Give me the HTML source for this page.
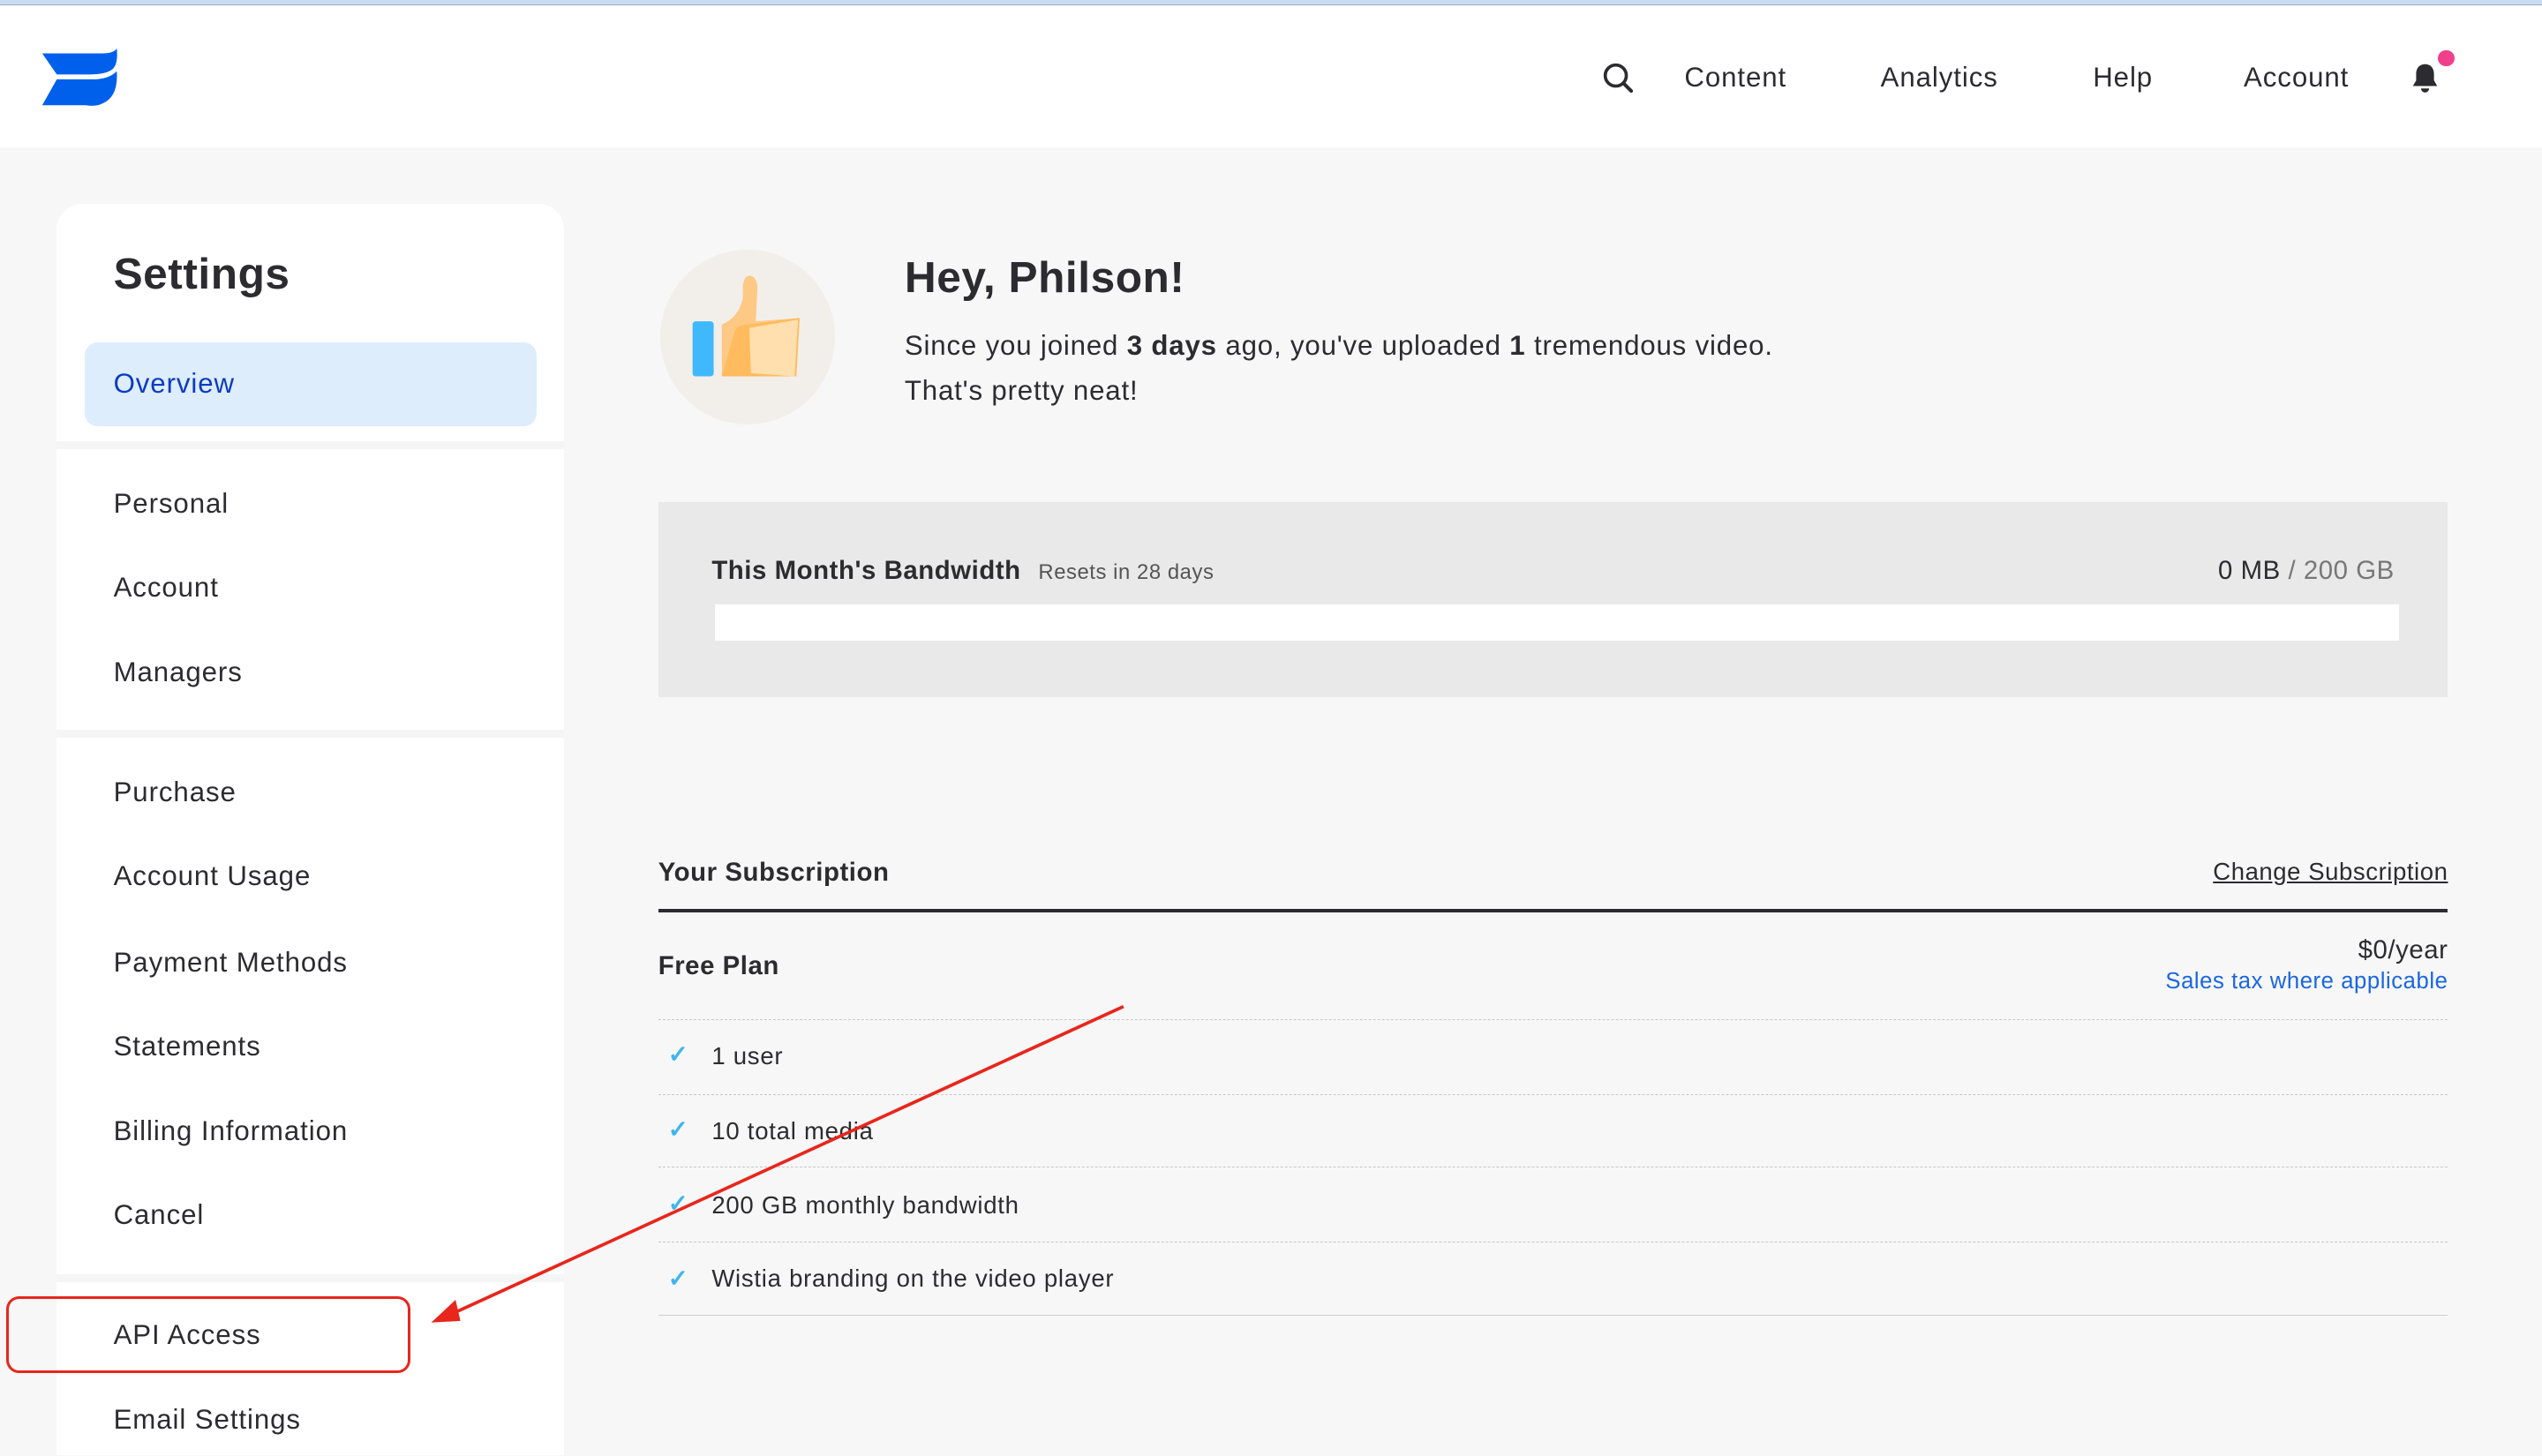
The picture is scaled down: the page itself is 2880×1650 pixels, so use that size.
<!DOCTYPE html>
<html><head><meta charset="utf-8"><style>
*{box-sizing:border-box;margin:0;padding:0}
html,body{width:2880px;height:1650px;overflow:hidden}
body{background:#f7f7f7;font-family:"Liberation Sans",sans-serif;color:#2c2c30;letter-spacing:0.3px}
#w{zoom:1.83673;width:1568px;height:898px;position:relative;overflow:hidden}
.top{position:absolute;left:0;top:0;width:1568px;height:3px;background:#c9dbf3;border-bottom:1px solid #9fb0c8}
.hdr{position:absolute;left:0;top:4px;width:1568px;height:87px;background:#fff}
.nav{position:absolute;top:38px;font-size:17px;color:#2c2c30;letter-spacing:0.5px}
.side{position:absolute;left:35px;top:126px;width:313px;height:800px;background:#fff;border-radius:16px}
.band{position:absolute;left:35px;width:313px;height:5px;background:#f5f5f5}
.it{position:absolute;left:70px;font-size:17px;color:#2c2c30;letter-spacing:0.5px}
.dash{position:absolute;left:406px;width:1104px;border-top:1px dashed #c8c8c8}
.ck{position:absolute;left:412px;color:#3fb5f0;font-size:15px;font-weight:bold}
.fi{position:absolute;left:439px;font-size:15px;color:#2c2c30;letter-spacing:0.4px}
</style></head><body><div id="w">
<div class="top"></div>
<div class="hdr"></div>
<svg style="position:absolute;left:25px;top:30px" width="48" height="36" viewBox="0 0 48 36">
<path d="M1 3 L38 3 Q45 3 47 0 Q48 10 44 13 Q40 16 30 16 L10 16 Z" fill="#0060eb"/>
<path d="M10 19 L32 19 Q42 19 47 14 Q48 30 38 34 Q34 36 28 35 L1 35 Z" fill="#0060eb"/>
</svg>
<svg style="position:absolute;left:988px;top:38px" width="20" height="20" viewBox="0 0 20 20"><circle cx="8.5" cy="8.5" r="6.5" fill="none" stroke="#2c2c30" stroke-width="2"/><path d="M13.5 13.5L18 18" stroke="#2c2c30" stroke-width="2.2" stroke-linecap="round"/></svg>
<div class="nav" style="left:1039px">Content</div>
<div class="nav" style="left:1160px">Analytics</div>
<div class="nav" style="left:1291px">Help</div>
<div class="nav" style="left:1384px">Account</div>
<svg style="position:absolute;left:1487px;top:38px" width="18" height="20" viewBox="0 0 18 20"><path d="M9 1.5c-3.5 0-5.5 2.5-5.5 6v4L1.5 15h15l-2-3.5v-4c0-3.5-2-6-5.5-6z" fill="#2c2c30"/><path d="M6.5 16.5a2.5 2.5 0 0 0 5 0z" fill="#2c2c30"/></svg>
<div style="position:absolute;left:1504px;top:31px;width:10px;height:10px;border-radius:50%;background:#f0408b"></div>

<div class="side"></div>
<div style="position:absolute;left:70px;top:153px;font-size:27px;font-weight:bold;color:#2c2c30">Settings</div>
<div style="position:absolute;left:52px;top:211px;width:279px;height:52px;background:#deedfc;border-radius:8px"></div>
<div class="it" style="top:227px;color:#0a3bc2">Overview</div>
<div class="band" style="top:272px"></div>
<div class="it" style="top:301px">Personal</div>
<div class="it" style="top:353px">Account</div>
<div class="it" style="top:405px">Managers</div>
<div class="band" style="top:450px"></div>
<div class="it" style="top:479px">Purchase</div>
<div class="it" style="top:531px">Account Usage</div>
<div class="it" style="top:584px">Payment Methods</div>
<div class="it" style="top:636px">Statements</div>
<div class="it" style="top:688px">Billing Information</div>
<div class="it" style="top:740px">Cancel</div>
<div class="band" style="top:786px"></div>
<div class="it" style="top:814px">API Access</div>
<div class="it" style="top:866px">Email Settings</div>
<div style="position:absolute;left:4px;top:800px;width:249px;height:47px;border:2px solid #e8261c;border-radius:8px"></div>

<div style="position:absolute;left:407px;top:154px;width:108px;height:108px;border-radius:50%;background:#f2efeb"></div>
<svg style="position:absolute;left:425px;top:168px" width="72" height="70" viewBox="0 0 72 70">
<rect x="2" y="30" width="13" height="34" rx="2" fill="#40b8fc"/>
<path d="M20 32 Q30 28 33 16 L33 8 Q34 1 38 2 Q42 3 42 10 L41 30 L68 28 L66 64 L20 64 Z" fill="#fec985"/>
<path d="M20 64 L28 36 Q30 32 36 32 L68 28 L66 64 Z" fill="#ffbb5d"/>
<path d="M37 34 L67 29 L65 64 L38 62 Z" fill="#ffdfae"/>
</svg>
<div style="position:absolute;left:558px;top:155px;font-size:27px;font-weight:bold">Hey, Philson!</div>
<div style="position:absolute;left:558px;top:199px;font-size:17px;line-height:28px;letter-spacing:0.45px">Since you joined <b>3 days</b> ago, you've uploaded <b>1</b> tremendous video.<br>That's pretty neat!</div>

<div style="position:absolute;left:406px;top:310px;width:1104px;height:120px;background:#e9e9ea"></div>
<div style="position:absolute;left:439px;top:343px;font-size:16px;font-weight:bold">This Month's Bandwidth <span style="font-weight:normal;font-size:13px;color:#555;margin-left:6px">Resets in 28 days</span></div>
<div style="position:absolute;right:91px;top:343px;font-size:16px">0 MB <span style="color:#777">/ 200 GB</span></div>
<div style="position:absolute;left:441px;top:373px;width:1039px;height:22px;background:#fff"></div>

<div style="position:absolute;left:406px;top:529px;font-size:16px;font-weight:bold">Your Subscription</div>
<div style="position:absolute;right:58px;top:529px;font-size:15px;text-decoration:underline">Change Subscription</div>
<div style="position:absolute;left:406px;top:561px;width:1104px;height:2px;background:#2c2c30"></div>
<div style="position:absolute;left:406px;top:587px;font-size:16px;font-weight:bold">Free Plan</div>
<div style="position:absolute;right:58px;top:577px;font-size:16px">$0/year</div>
<div style="position:absolute;right:58px;top:598px;font-size:14px;color:#1a66e0">Sales tax where applicable</div>
<div class="dash" style="top:629px"></div>
<div class="ck" style="top:642px">✓</div><div class="fi" style="top:643px">1 user</div>
<div class="dash" style="top:675px"></div>
<div class="ck" style="top:688px">✓</div><div class="fi" style="top:689px">10 total media</div>
<div class="dash" style="top:720px"></div>
<div class="ck" style="top:734px">✓</div><div class="fi" style="top:735px">200 GB monthly bandwidth</div>
<div class="dash" style="top:766px"></div>
<div class="ck" style="top:780px">✓</div><div class="fi" style="top:780px">Wistia branding on the video player</div>
<div style="position:absolute;left:406px;top:811px;width:1104px;border-top:1px solid #cfcfcf"></div>

<svg style="position:absolute;left:0;top:0" width="1568" height="898"><line x1="693" y1="621" x2="278" y2="811" stroke="#e8261c" stroke-width="2"/><path d="M266 816 L281 802 L284 815 Z" fill="#e8261c"/></svg>
</div></body></html>
